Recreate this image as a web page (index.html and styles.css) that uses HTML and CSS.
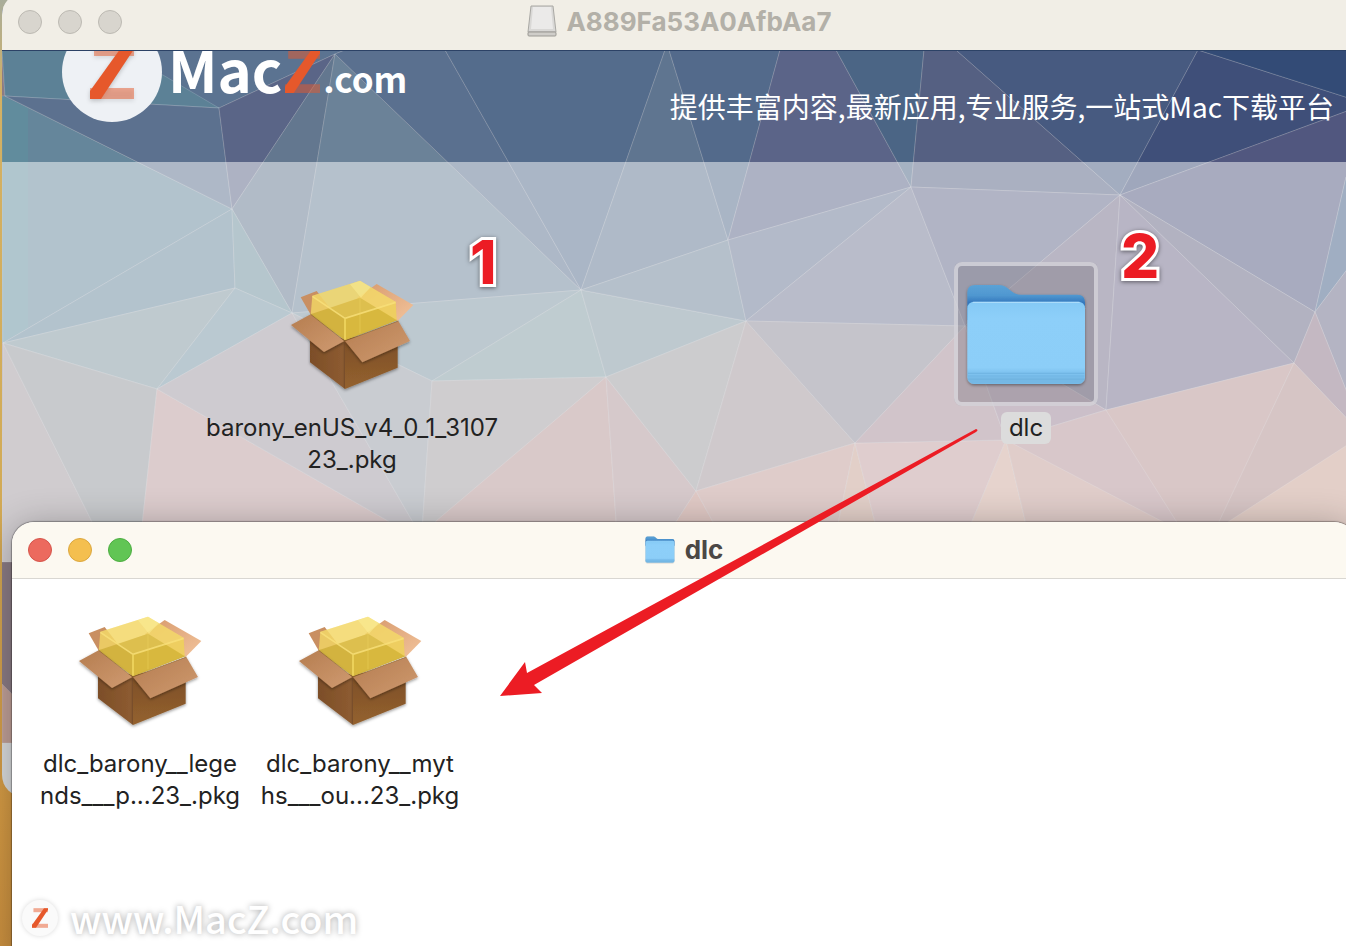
FILE: index.html
```html
<!DOCTYPE html>
<html lang="zh-CN">
<head>
  <meta charset="UTF-8" />
  <meta name="viewport" content="width=device-width, initial-scale=1.0"/>
  <title>A889Fa53A0AfbAa7</title>
  <link rel="stylesheet" href="styles.css">
</head>
<body>
  <!-- Shared drawings -->
  <svg class="defs" width="0" height="0" aria-hidden="true">
    <defs>
      <linearGradient id="boxLeft" x1="0" y1="0" x2="1" y2="0"><stop offset="0" stop-color="#7c4e28"/><stop offset="1" stop-color="#8e5c31"/></linearGradient>
      <linearGradient id="boxRight" x1="0" y1="0" x2="0" y2="1"><stop offset="0" stop-color="#784a25"/><stop offset="1" stop-color="#94622f"/></linearGradient>
      <linearGradient id="flap" x1="0" y1="0" x2="1" y2="1"><stop offset="0" stop-color="#b57d50"/><stop offset="1" stop-color="#cf9a70"/></linearGradient>
      <linearGradient id="flapBack" x1="0" y1="0" x2="1" y2="1"><stop offset="0" stop-color="#d79a6c"/><stop offset="1" stop-color="#f2c39c"/></linearGradient>
      <linearGradient id="folderBack" x1="0" y1="0" x2="0" y2="1"><stop offset="0" stop-color="#5ba2d6"/><stop offset="0.3" stop-color="#4f97d0"/><stop offset="0.5" stop-color="#3478bd"/></linearGradient>
      <linearGradient id="folderFront" x1="0" y1="0" x2="0" y2="1"><stop offset="0" stop-color="#84c9f5"/><stop offset="0.2" stop-color="#8dcff9"/><stop offset="0.8" stop-color="#8ccef8"/><stop offset="0.87" stop-color="#7dc1ee"/></linearGradient>
      <filter id="soft" x="-10%" y="-10%" width="120%" height="125%"><feDropShadow dx="0" dy="4" stdDeviation="4" flood-color="#000" flood-opacity="0.4"/></filter>

      <g id="package">
        <polygon points="90,200 195,222 195,372 90,292" fill="url(#boxLeft)" filter="url(#soft)"/>
        <polygon points="195,222 353,190 353,308 195,372" fill="url(#boxRight)" filter="url(#soft)"/>
        <polygon points="62,97 110,78 150,130 94,152" fill="#c98f62"/>
        <polygon points="290,57 400,120 353,168 230,100" fill="url(#flapBack)"/>
        <polygon points="92,150 240,98 352,166 195,226" fill="#c4a53c"/>
        <polygon points="97,92 240,47 347,110 350,166 195,226 92,150" fill="#f3d765" fill-opacity="0.8"/>
        <polygon points="92,148 240,98 350,166 195,226" fill="#c4a22c" fill-opacity="0.6"/>
        <polygon points="97,92 240,47 347,110 195,160" fill="#f5dc70" fill-opacity="0.3"/>
        <polygon points="195,160 195,226 350,166 347,110" fill="#e8c83c" fill-opacity="0.25"/>
        <polygon points="210,58 240,47 272,66 243,98" fill="#fdf29c" fill-opacity="0.45"/>
        <polyline points="97,94 195,160 347,112" fill="none" stroke="#f9e17c" stroke-opacity="0.8" stroke-width="5"/>
        <line x1="195" y1="160" x2="195" y2="224" stroke="#f0d660" stroke-width="5"/>
        <line x1="240" y1="98" x2="240" y2="205" stroke="#f5dc66" stroke-opacity="0.3" stroke-width="4"/>
        <polygon points="33,180 92,148 193,228 132,261" fill="url(#flap)" filter="url(#soft)"/>
        <polygon points="195,228 355,168 390,228 247,292" fill="url(#flap)" filter="url(#soft)"/>
        <polyline points="92,148 194,228 355,168" fill="none" stroke="#8a6028" stroke-width="2"/>
      </g>

      <g id="folder">
        <g filter="url(#soft)">
          <path d="M82 300V217Q82 195 106 195H178C206 195 210 224 244 224H413Q435 224 435 248V300Z" fill="url(#folderBack)"/>
          <rect x="82" y="245" width="353" height="247" rx="20" fill="url(#folderFront)"/>
        </g>
        <path d="M84 460H433M84 468H433M84 478H433" stroke="#68addc" stroke-width="2"/>
        <path d="M84 472Q84 490 102 491H415Q433 490 433 472Z" fill="#6fb3df" fill-opacity="0.6"/>
        <path d="M98 247H419" stroke="#b4e0fb" stroke-width="3"/>
      </g>

      <g id="zmark">
        <rect x="4" y="0" width="40" height="11" fill="#e85a2c" fill-opacity="0.5"/>
        <rect x="0" y="43" width="44" height="11" fill="#e85a2c" fill-opacity="0.5"/>
        <polygon points="0,54 0,46 33,0 44,0 44,4 11,54" fill="#e6582b"/>
      </g>
    </defs>
  </svg>

  <main class="desktop">
    <section class="window window-back">
      <header class="titlebar">
        <div class="lights">
          <button class="light" aria-label="Close"></button>
          <button class="light" aria-label="Minimize"></button>
          <button class="light" aria-label="Zoom"></button>
        </div>
        <h1 class="title">
          <svg class="disk" viewBox="0 0 28 31" aria-hidden="true">
            <polygon points="3,0 25,0 28,26 0,26" fill="#d9d8d6" stroke="#a9a8a4"/>
            <polygon points="5,1 23,1 25,23 3,23" fill="#ebeae9"/>
            <rect x="0" y="26" width="28" height="4" rx="1" fill="#cfcdc9" stroke="#9b9994"/>
          </svg>
          A889Fa53A0AfbAa7
        </h1>
      </header>

      <div class="canvas">
        <svg class="wallpaper" viewBox="2 50 1356 693" preserveAspectRatio="xMinYMin slice" aria-hidden="true">
          <rect x="2" y="50" width="1356" height="693" fill="#8b7c85"/>
          <g class="facets">
            <polygon points="2,50 345,50 335,54 219,108 5,96" fill="#5b7391"/>
            <polygon points="2,50 62,50 163,75 219,108 5,96" fill="#5c8196"/>
            <polygon points="2,96 5,96 232,209 3,343" fill="#65869b"/>
            <polygon class="plain" points="2,96 28,108 28,328 2,343" fill="#5f919f"/>
            <polygon points="5,96 219,108 232,209" fill="#5c718f"/>
            <polygon points="219,108 335,54 232,209" fill="#5a6587"/>
            <polygon points="335,54 232,209 292,313" fill="#63778f"/>
            <polygon points="335,54 292,313 581,290" fill="#6b8298"/>
            <polygon points="335,54 345,50 445,50 581,290" fill="#5a708f"/>
            <polygon points="445,50 665,50 581,290" fill="#546c8c"/>
            <polygon points="665,50 669,50 728,240 581,290" fill="#5f7590"/>
            <polygon points="669,50 780,50 728,240" fill="#536a8b"/>
            <polygon points="780,50 836,50 911,187 728,240" fill="#5b6488"/>
            <polygon points="836,50 924,50 911,187" fill="#4b6585"/>
            <polygon points="924,50 956,50 1120,195 911,187" fill="#556082"/>
            <polygon points="956,50 1198,50 1120,195" fill="#475a80"/>
            <polygon points="1198,50 1358,101 1358,107 1120,195" fill="#3f4f79"/>
            <polygon points="1198,50 1358,50 1358,101" fill="#334b76"/>
            <polygon points="1120,195 1358,107 1358,177 1346,177 1315,312" fill="#51577f"/>
            <polygon points="1346,177 1358,177 1358,255 1315,312" fill="#415d85"/>
            <polygon points="3,343 232,209 235,288" fill="#66869b"/>
            <polygon points="232,209 235,288 292,313" fill="#6b8d9b"/>
            <polygon points="3,343 235,288 157,389" fill="#7f959f"/>
            <polygon points="235,288 292,313 157,389" fill="#7593a3"/>
            <polygon points="292,313 581,290 432,381" fill="#7b93a1"/>
            <polygon points="581,290 432,381 606,377" fill="#7f99a1"/>
            <polygon points="581,290 606,377 746,321" fill="#7d939f"/>
            <polygon points="581,290 728,240 746,321" fill="#6b8197"/>
            <polygon points="728,240 911,187 746,321" fill="#677593"/>
            <polygon points="911,187 746,321 965,326" fill="#737995"/>
            <polygon points="911,187 1120,195 965,326" fill="#63698b"/>
            <polygon points="1120,195 965,326 1106,410" fill="#736d89"/>
            <polygon points="1120,195 1106,410 1294,363" fill="#716b8b"/>
            <polygon points="1120,195 1294,363 1315,312" fill="#656583"/>
            <polygon points="1315,312 1358,255 1358,420" fill="#696987"/>
            <polygon points="1315,312 1358,420 1358,430 1294,363" fill="#897185"/>
            <polygon points="3,343 2,562 112,562" fill="#a1999f"/>
            <polygon points="3,343 157,389 138,562 112,562" fill="#91959b"/>
            <polygon points="157,389 138,562 460,562" fill="#b9999b"/>
            <polygon points="157,389 292,313 436,562 460,562" fill="#9d97a1"/>
            <polygon points="292,313 432,381 420,562 436,562" fill="#9399a3"/>
            <polygon points="432,381 606,377 390,562 420,562" fill="#9f9b9f"/>
            <polygon points="606,377 436,521 420,562 619,562" fill="#b39393"/>
            <polygon points="606,377 619,562 650,562 696,491" fill="#ad9397"/>
            <polygon points="606,377 746,321 696,491" fill="#99999d"/>
            <polygon points="746,321 696,491 855,443" fill="#9f9399"/>
            <polygon points="746,321 965,326 855,443" fill="#8b8997"/>
            <polygon points="696,491 650,562 735,562" fill="#c1928a"/>
            <polygon points="696,491 855,443 830,562 735,562" fill="#bf9995"/>
            <polygon points="855,443 830,562 885,562" fill="#c59f91"/>
            <polygon points="855,443 1006,440 955,562 885,562" fill="#bf9b9d"/>
            <polygon points="965,326 855,443 1006,440" fill="#a38995"/>
            <polygon points="965,326 1106,410 1006,440" fill="#977f93"/>
            <polygon points="1006,440 955,562 1035,562" fill="#cda79b"/>
            <polygon points="1006,440 1035,562 1280,562" fill="#c19b95"/>
            <polygon points="1006,440 1106,410 1240,562" fill="#b18f95"/>
            <polygon points="1106,410 1294,363 1202,562" fill="#b38f8f"/>
            <polygon points="1294,363 1358,430 1358,562 1200,562" fill="#ad8b8b"/>
            <polygon points="1358,438 1358,562 1166,562" fill="#c79f91"/>
            <polygon points="2,684 12,694 12,743 2,743" fill="#c0a098"/>
          </g>
          <rect class="veil" x="2" y="162" width="1356" height="400"/>
        </svg>

        <div class="banner">
          <div class="brand">
            <span class="brand-disc"><svg viewBox="0 0 44 54" role="img" aria-label="Z"><use href="#zmark"/></svg></span>
            <div class="brand-name">
              <span class="brand-mac">Mac</span>
              <svg class="brand-z" viewBox="0 0 44 54" role="img" aria-label="Z"><use href="#zmark"/></svg>
              <span class="brand-com">.com</span>
            </div>
          </div>
          <p class="slogan">提供丰富内容,最新应用,专业服务,一站式Mac下载平台</p>
        </div>

        <figure class="file file-game">
          <svg class="file-icon" viewBox="0 -9 432 432" aria-hidden="true"><use href="#package"/></svg>
          <figcaption>barony_enUS_v4_0_1_3107<br>23_.pkg</figcaption>
        </figure>
        <figure class="file file-dlc selected">
          <svg class="file-icon" viewBox="42 126 432 432" aria-hidden="true"><use href="#folder"/></svg>
          <figcaption>dlc</figcaption>
        </figure>
      </div>
      <footer class="statusbar"></footer>
    </section>

    <section class="window window-front">
      <header class="titlebar">
        <div class="lights">
          <button class="light red" aria-label="Close"></button>
          <button class="light yellow" aria-label="Minimize"></button>
          <button class="light green" aria-label="Zoom"></button>
        </div>
        <h2 class="title">
          <svg class="mini-folder" viewBox="76 190 366 318" preserveAspectRatio="none" aria-hidden="true"><use href="#folder"/></svg>
          dlc
        </h2>
      </header>
      <div class="files">
        <figure class="file">
          <svg class="file-icon" viewBox="0 -9 432 432" aria-hidden="true"><use href="#package"/></svg>
          <figcaption>dlc_barony__lege<br>nds___p...23_.pkg</figcaption>
        </figure>
        <figure class="file">
          <svg class="file-icon" viewBox="0 -9 432 432" aria-hidden="true"><use href="#package"/></svg>
          <figcaption>dlc_barony__myt<br>hs___ou...23_.pkg</figcaption>
        </figure>
      </div>
    </section>

    <!-- Annotations over both windows -->
    <span class="step step-one">1</span>
    <span class="step step-two">2</span>
    <svg class="arrow" viewBox="500 428 478 269" aria-hidden="true">
      <path d="M500 696L525 662L527 673L976 429Q979 430 976 432L534 685L542 693Z" fill="#ec1c24"/>
    </svg>
    <div class="watermark">
      <span class="watermark-disc"><svg viewBox="0 0 44 54" role="img" aria-label="Z"><use href="#zmark"/></svg></span>
      <span>www.MacZ.com</span>
    </div>
  </main>
</body>
</html>
```

FILE: styles.css
```css
* {
  box-sizing: border-box;
}

body {
  margin: 0;
  font-family: Inter, "Liberation Sans", "Noto Sans CJK SC", sans-serif;
  color: #222;
}

.defs {
  position: absolute;
}

.desktop {
  position: relative;
  height: 100vh;
  overflow: hidden;
  background: linear-gradient(#a9ad9a, #d3b164 10%, #d2ab57 50%, #d49a44 85%, #cc9140);
}

/* Windows */
.window {
  position: absolute;
  isolation: isolate;
  display: flex;
  flex-direction: column;
  overflow: hidden;
}

.window-back {
  top: -7px;
  left: 2px;
  right: -12px;
  height: 804px;
  border-radius: 22px;
  background: #d9dbdd;
}

.window-front {
  top: 522px;
  left: 12px;
  right: -10px;
  bottom: -30px;
  border-radius: 22px;
  background: #fff;
  box-shadow: 0 0 1px 1px rgba(0, 0, 0, 0.3), 0 4px 36px rgba(0, 0, 0, 0.3);
}

.titlebar {
  display: grid;
  grid-template-columns: 1fr auto 1fr;
  align-items: center;
  flex: none;
  height: 57px;
  padding: 0 16px;
  background: #f1eee6;
  box-shadow: 0 1px 0 #2c4266;
  z-index: 1;
}

.window-front .titlebar {
  background: #fcf9f1;
  box-shadow: none;
  border-bottom: 1px solid #d9d7d2;
}

.lights {
  display: flex;
  gap: 16px;
}

.light {
  width: 24px;
  height: 24px;
  padding: 0;
  border: 1px solid #bcb9b2;
  border-radius: 50%;
  background: #d8d5ce;
}

.red {
  background: #ec6a5e;
  border-color: #d5554b;
}

.yellow {
  background: #f4bf4f;
  border-color: #dba73f;
}

.green {
  background: #61c554;
  border-color: #4dad41;
}

.title {
  display: flex;
  align-items: center;
  gap: 10px;
  margin: 0;
  font-size: 26px;
  font-weight: 700;
  line-height: 32px;
  color: #b3b0a8;
}

.window-front .title {
  color: #4b4845;
}

.disk {
  width: 28px;
  height: 31px;
  overflow: visible;
}

.mini-folder {
  width: 30px;
  height: 28px;
}

/* Disk image content */
.canvas {
  position: relative;
  flex: 1;
  overflow: hidden;
}

.wallpaper {
  position: absolute;
  top: 0;
  left: 0;
  width: 100%;
  height: 100%;
}

.facets polygon {
  stroke: #dbe4ea;
  stroke-opacity: 0.2;
  stroke-width: 1;
}

.facets .plain {
  stroke: none;
  fill-opacity: 0.6;
}

.veil {
  fill: #fff;
  fill-opacity: 0.5;
}

.banner {
  position: relative;
  display: flex;
  justify-content: space-between;
  height: 112px;
  padding: 0 24px 0 60px;
  overflow: hidden;
  color: #fff;
}

.brand {
  display: flex;
  align-items: flex-start;
  gap: 6px;
  margin-top: -28px;
}

.brand-disc {
  display: flex;
  align-items: center;
  justify-content: center;
  width: 100px;
  height: 100px;
  border-radius: 50%;
  background: #eef1f5;
}

.brand-disc svg {
  width: 44px;
  height: 54px;
  overflow: visible;
  filter: drop-shadow(0 2px 2px rgba(0, 0, 0, 0.2));
}

.brand-name {
  display: flex;
  align-items: baseline;
  font-family: "Noto Sans CJK SC", sans-serif;
  font-weight: 700;
  line-height: 92px;
}

.brand-mac {
  font-size: 58px;
}

.brand-z {
  width: 35px;
  height: 43px;
  margin: 0 3px;
}

.brand-com {
  font-size: 35px;
}

.slogan {
  align-self: center;
  margin: 0;
  font-family: "Noto Sans CJK SC", sans-serif;
  font-size: 28px;
  line-height: 40px;
  white-space: nowrap;
}

.statusbar {
  flex: none;
  height: 54px;
}

/* Files */
.files {
  display: flex;
  padding: 19px 18px;
}

.file {
  display: flex;
  flex-direction: column;
  align-items: center;
  gap: 6px;
  width: 220px;
  margin: 0;
  text-align: center;
}

.file-icon {
  width: 144px;
  height: 144px;
}

.file figcaption {
  font-size: 24px;
  line-height: 32px;
  white-space: nowrap;
}

.file-game,
.file-dlc {
  position: absolute;
  top: 212px;
}

.file-game {
  left: 240px;
}

.file-dlc {
  left: 914px;
}

.selected .file-icon {
  border-radius: 8px;
  background: rgba(115, 110, 120, 0.35);
  outline: 4px solid rgba(235, 235, 240, 0.6);
  outline-offset: -4px;
}

.selected figcaption {
  padding: 0 8px;
  border-radius: 6px;
  background: #dcdcdc;
}

/* Annotations */
.step {
  position: absolute;
  font-size: 60px;
  font-weight: 800;
  line-height: 60px;
  color: #ec1c24;
  -webkit-text-stroke: 6px #fff;
  paint-order: stroke fill;
  filter: drop-shadow(0 1px 2px rgba(0, 0, 0, 0.5));
}

.step-one {
  top: 232px;
  left: 470px;
}

.step-two {
  top: 226px;
  left: 1121px;
}

.arrow {
  position: absolute;
  top: 428px;
  left: 500px;
  width: 478px;
  height: 269px;
}

.watermark {
  position: absolute;
  left: 22px;
  bottom: 2px;
  display: flex;
  align-items: center;
  gap: 12px;
  font-family: "Noto Sans CJK SC", sans-serif;
  font-size: 38px;
  font-weight: 500;
  line-height: 52px;
  color: #fff;
  text-shadow: 0 0 6px rgba(0, 0, 0, 0.35);
}

.watermark-disc {
  display: flex;
  align-items: center;
  justify-content: center;
  width: 36px;
  height: 36px;
  border-radius: 50%;
  background: #fafafa;
  box-shadow: 0 0 5px rgba(0, 0, 0, 0.15);
}

.watermark-disc svg {
  width: 16px;
  height: 20px;
}
```
